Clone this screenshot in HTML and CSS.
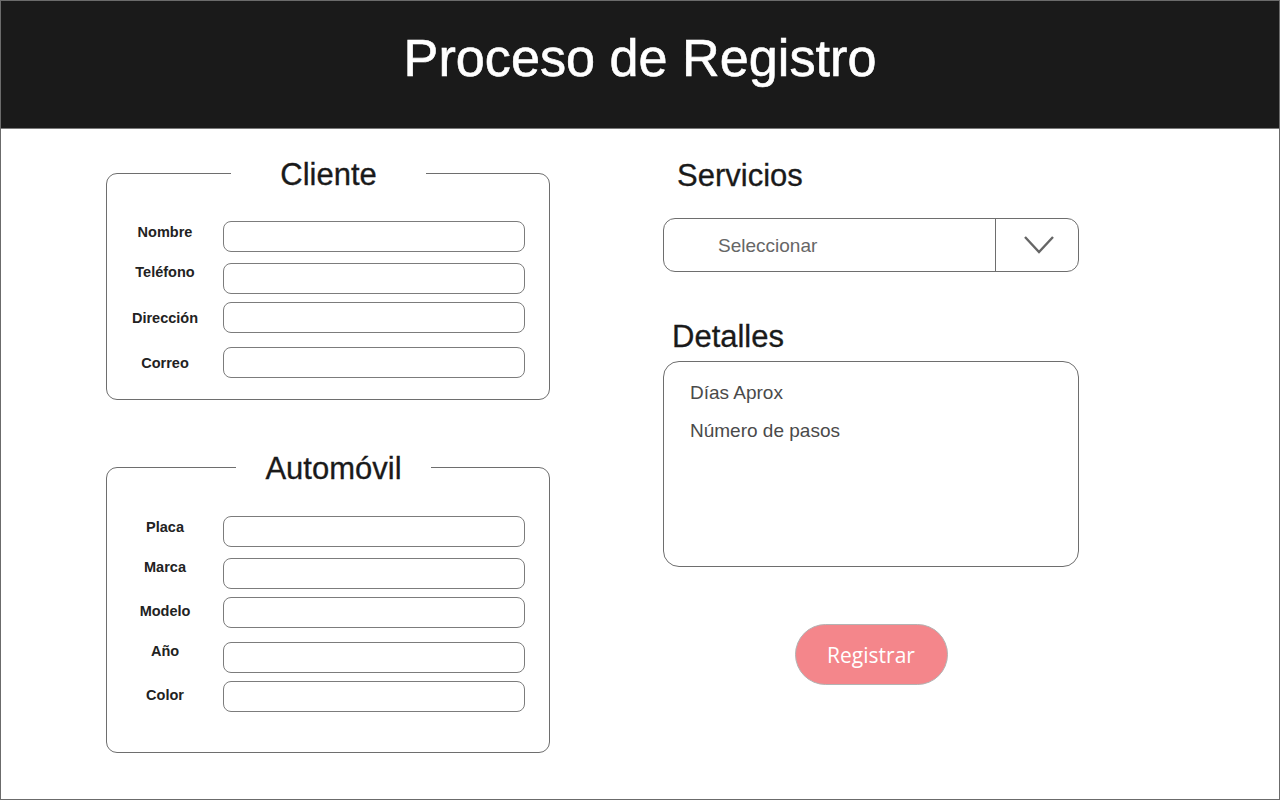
FILE: index.html
```html
<!DOCTYPE html>
<html lang="es">
<head>
<meta charset="utf-8">
<title>Proceso de Registro</title>
<link rel="stylesheet" href="styles.css">
</head>
<body>
<div class="page">
  <header class="header">
    <h1 class="title">Proceso de Registro</h1>
  </header>
  <main class="main">
    <section class="left">
      <fieldset class="group">
        <legend class="legend"><span class="legend-text">Cliente</span></legend>
        <div class="row"><label class="lbl up">Nombre</label><input class="field" type="text"></div>
        <div class="row gap-m"><label class="lbl up2">Teléfono</label><input class="field" type="text"></div>
        <div class="row gap-s"><label class="lbl">Dirección</label><input class="field" type="text"></div>
        <div class="row gap-l"><label class="lbl">Correo</label><input class="field" type="text"></div>
      </fieldset>
      <fieldset class="group group-auto">
        <legend class="legend legend-auto"><span class="legend-text">Automóvil</span></legend>
        <div class="row"><label class="lbl up">Placa</label><input class="field" type="text"></div>
        <div class="row gap-m"><label class="lbl up2">Marca</label><input class="field" type="text"></div>
        <div class="row gap-s"><label class="lbl up1">Modelo</label><input class="field" type="text"></div>
        <div class="row gap-l"><label class="lbl up2">Año</label><input class="field" type="text"></div>
        <div class="row gap-s"><label class="lbl up1">Color</label><input class="field" type="text"></div>
      </fieldset>
    </section>
    <section class="right">
      <h2 class="heading heading-serv">Servicios</h2>
      <div class="select">
        <span class="select-text">Seleccionar</span>
        <span class="select-btn">
          <svg width="32" height="20" viewBox="0 0 32 20" aria-hidden="true"><path d="M2 2 L16 17 L30 2" fill="none" stroke="#666" stroke-width="2.4" stroke-linecap="butt" stroke-linejoin="miter"/></svg>
        </span>
      </div>
      <h2 class="heading heading-det">Detalles</h2>
      <div class="details">
        <p class="detail-line">Días Aprox</p>
        <p class="detail-line">Número de pasos</p>
      </div>
      <div class="actions">
        <button class="btn" type="button">Registrar</button>
      </div>
    </section>
  </main>
</div>
</body>
</html>
```

FILE: styles.css
```css
* { box-sizing: border-box; }
html, body { margin: 0; padding: 0; background: #fff; }
body { font-family: "Liberation Sans", Arial, Helvetica, sans-serif; color: #1a1a1a; }

.page {
  width: 1280px;
  height: 800px;
  border: 1px solid #6b6b6b;
  overflow: hidden;
}

.header {
  height: 128px;
  background: #1a1a1a;
  border-bottom: 1px solid #7a7a7a;
  display: flex;
  justify-content: center;
  padding-top: 31px;
}
.title {
  margin: 0;
  font-weight: normal;
  font-size: 52.2px;
  line-height: 52px;
  color: #fff;
  -webkit-text-stroke: 0.6px #fff;
}

.main {
  display: flex;
  padding-left: 105px;
  gap: 113px;
}

.left { width: 444px; }

.group {
  margin: 26px 0 0 0;
  padding: 30px 24px 21px 0;
  border: 1px solid #6e6e6e;
  border-radius: 11px;
  min-inline-size: 0;
}
.group-auto {
  margin-top: 49px;
  padding-top: 31px;
  padding-bottom: 40px;
}
.legend {
  margin-left: 124px;
  padding: 0;
  text-align: left;
}
.legend-auto { margin-left: 129px; }
.legend-text {
  display: block;
  width: 195px;
  padding-top: 4px;
  text-align: center;
  font-size: 31px;
  line-height: 32px;
  color: #1a1a1a;
  -webkit-text-stroke: 0.3px #1a1a1a;
}

.row {
  display: grid;
  grid-template-columns: 116px 1fr;
  align-items: center;
}
.gap-s { margin-top: 8px; }
.gap-m { margin-top: 11px; }
.gap-l { margin-top: 14px; }

.lbl {
  text-align: center;
  font-size: 14.5px;
  font-weight: bold;
  line-height: 16px;
  color: #222;
}
.up { padding-bottom: 9px; }
.up1 { padding-bottom: 3px; }
.up2 { padding-bottom: 13px; }

.field {
  display: block;
  width: 100%;
  height: 31px;
  margin: 0;
  border: 1px solid #7c7c7c;
  border-radius: 8px;
  background: #fff;
  outline: none;
}

.right {
  width: 416px;
  display: flex;
  flex-direction: column;
}

.heading {
  margin: 0;
  font-weight: normal;
  font-size: 31px;
  line-height: 36px;
  color: #1a1a1a;
  -webkit-text-stroke: 0.3px #1a1a1a;
}
.heading-serv { margin-top: 29px; padding-left: 14px; }
.heading-det { margin-top: 47px; padding-left: 9px; }

.select {
  margin-top: 24px;
  height: 54px;
  border: 1px solid #6e6e6e;
  border-radius: 12px;
  display: flex;
}
.select-text {
  flex: 1;
  display: flex;
  align-items: center;
  padding: 2px 0 0 54px;
  font-size: 19px;
  color: #666;
  border-right: 1px solid #6e6e6e;
}
.select-btn {
  width: 82px;
  display: flex;
  align-items: center;
  justify-content: center;
  padding-left: 4px;
}

.details {
  margin-top: 6px;
  height: 206px;
  border: 1px solid #6e6e6e;
  border-radius: 16px;
  padding: 12px 0 0 26px;
}
.detail-line {
  margin: 0;
  font-size: 19px;
  line-height: 38px;
  color: #4a4a4a;
}

.actions {
  display: flex;
  justify-content: center;
  margin-top: 57px;
}
.btn {
  width: 153px;
  height: 61px;
  border: 1px solid #b3b3b3;
  border-radius: 31px;
  background: #f4868b;
  color: #fff;
  font-family: "Open Sans", "Liberation Sans", sans-serif;
  font-size: 21px;
  padding: 0;
}
```
